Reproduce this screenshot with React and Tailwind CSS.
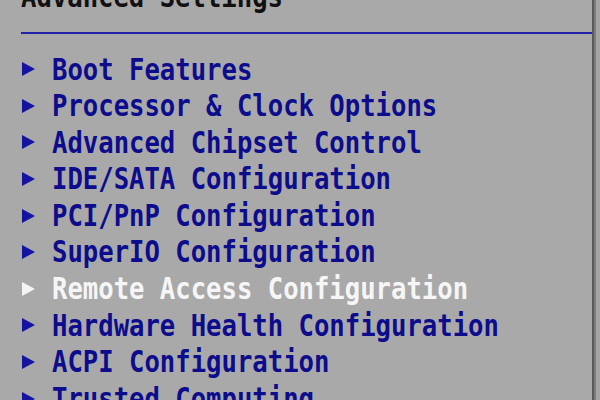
const items = [
  { label: "Boot Features" },
  { label: "Processor & Clock Options" },
  { label: "Advanced Chipset Control" },
  { label: "IDE/SATA Configuration" },
  { label: "PCI/PnP Configuration" },
  { label: "SuperIO Configuration" },
  { label: "Remote Access Configuration", selected: true },
  { label: "Hardware Health Configuration" },
  { label: "ACPI Configuration" },
  { label: "Trusted Computing" },
];

function Arrow({ selected }) {
  return (
    <svg width="15" height="16" viewBox="0 0 15 16" className="shrink-0">
      <polygon points="1,1 14,8 1,15" fill={selected ? "#f4f4f4" : "#1414a0"} />
    </svg>
  );
}

export default function App() {
  return (
    <div className="w-[600px] h-[400px] overflow-hidden flex bg-[#a9a9a9] font-['DejaVu_Sans_Mono',monospace]">
      {/* Main panel */}
      <div className="flex-1 flex flex-col pl-[21px]">
        <div className="h-[32px] relative shrink-0">
          <div className="absolute left-0 top-[-15px] text-[25.6px] leading-[28px] font-bold text-[#111] scale-y-[1.2] origin-bottom whitespace-pre">
            Advanced Settings
          </div>
        </div>
        <div className="h-[2px] bg-[#2222a8] shrink-0" />
        <div className="flex flex-col pt-[17px] shrink-0">
          {items.map((item) => (
            <div key={item.label} className="h-[36.6px] flex items-center shrink-0">
              <div className="w-[31px] flex items-center">
                <Arrow selected={item.selected} />
              </div>
              <span
                className={`text-[25.6px] leading-none font-bold whitespace-pre scale-y-[1.2] ${
                  item.selected ? "text-[#f6f6f6]" : "text-[#0c0c8c]"
                }`}
              >
                {item.label}
              </span>
            </div>
          ))}
        </div>
      </div>
      {/* Right frame edge */}
      <div className="w-[2px] bg-[#5a5a5a]" />
      <div className="w-[2px] bg-[#7c7c7c]" />
      <div className="w-[4px] bg-[#a4a4a4]" />
    </div>
  );
}
